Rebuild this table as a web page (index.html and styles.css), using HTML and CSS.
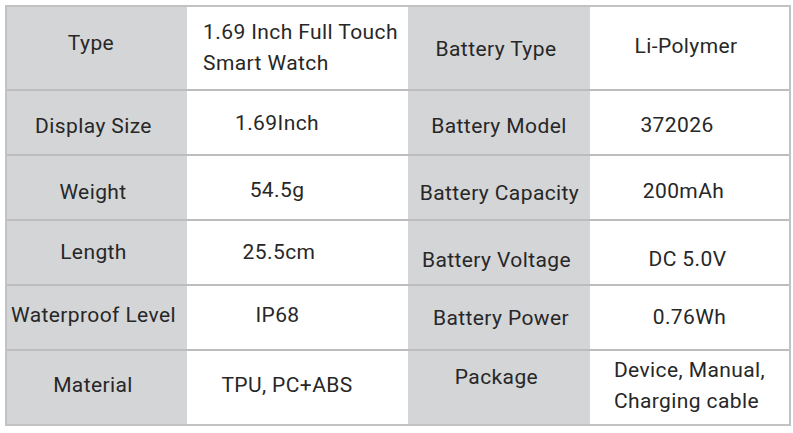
FILE: index.html
```html
<!DOCTYPE html>
<html lang="en">
<head>
<meta charset="utf-8">
<title>Smart Watch Specifications</title>
<link rel="stylesheet" href="styles.css">
</head>
<body>
<div class="sheet">
  <div class="cell label">Type</div>
  <div class="cell value multi">1.69 Inch Full Touch<br>Smart Watch</div>
  <div class="cell label">Battery Type</div>
  <div class="cell value">Li-Polymer</div>

  <div class="cell label">Display Size</div>
  <div class="cell value">1.69Inch</div>
  <div class="cell label">Battery Model</div>
  <div class="cell value">372026</div>

  <div class="cell label">Weight</div>
  <div class="cell value">54.5g</div>
  <div class="cell label">Battery Capacity</div>
  <div class="cell value">200mAh</div>

  <div class="cell label">Length</div>
  <div class="cell value">25.5cm</div>
  <div class="cell label">Battery Voltage</div>
  <div class="cell value">DC 5.0V</div>

  <div class="cell label">Waterproof Level</div>
  <div class="cell value">IP68</div>
  <div class="cell label">Battery Power</div>
  <div class="cell value">0.76Wh</div>

  <div class="cell label last">Material</div>
  <div class="cell value last">TPU, PC+ABS</div>
  <div class="cell label last">Package</div>
  <div class="cell value multi last">Device, Manual,<br>Charging cable</div>
</div>
</body>
</html>
```
FILE: styles.css
```css
html, body {
  margin: 0;
  padding: 0;
  background: #ffffff;
}

body {
  font-family: Roboto, "Liberation Sans", Arial, sans-serif;
  font-size: 21px;
  letter-spacing: 0.4px;
  color: #272727;
}

.sheet {
  box-sizing: border-box;
  margin: 5px 0 0 5px;
  width: 786px;
  border: 2px solid #c2c2c4;
  display: grid;
  grid-template-columns: 180px 221px 182px 199px;
  grid-template-rows: 84px 65px 65px 65px 65px 73px;
}

.cell {
  box-sizing: border-box;
  display: flex;
  align-items: center;
  justify-content: center;
  text-align: center;
  white-space: nowrap;
  line-height: 31px;
  border-bottom: 2px solid #bdbdbf;
}

.cell.last {
  border-bottom: none;
}

.label {
  background: #d4d5d7;
}

.value {
  background: #ffffff;
}

.multi {
  text-align: left;
}

/* per-cell optical alignment, matching the source layout */
.cell:nth-child(1)  { padding: 0 12px 9px 0; }
.cell:nth-child(2)  { padding: 0 0 0 6px; }
.cell:nth-child(3)  { padding: 3px 6px 0 0; }
.cell:nth-child(4)  { padding: 0 7px 3px 0; }
.cell:nth-child(5)  { padding: 7px 7px 0 0; }
.cell:nth-child(6)  { padding: 2px 41px 0 0; }
.cell:nth-child(7)  { padding: 8px 0 0 0; }
.cell:nth-child(8)  { padding: 6px 25px 0 0; }
.cell:nth-child(9)  { padding: 9px 8px 0 0; }
.cell:nth-child(10) { padding: 5px 41px 0 0; }
.cell:nth-child(11) { padding: 11px 0 0 1px; }
.cell:nth-child(12) { padding: 8px 12px 0 0; }
.cell:nth-child(13) { padding: 0 7px 0 0; }
.cell:nth-child(14) { padding: 0 37px 0 0; }
.cell:nth-child(15) { padding: 16px 5px 0 0; }
.cell:nth-child(16) { padding: 14px 4px 0 0; }
.cell:nth-child(17) { padding: 0 7px 5px 0; }
.cell:nth-child(18) { padding: 0 40px 4px 0; }
.cell:nth-child(19) { padding: 2px 0 0 4px; }
.cell:nth-child(20) { padding: 0; }
.cell:nth-child(21) { padding: 0 8px 4px 0; }
.cell:nth-child(22) { padding: 0 21px 4px 0; }
.cell:nth-child(23) { padding: 0 5px 20px 0; }
.cell:nth-child(24) { padding: 0 0 4px 0; }
```
